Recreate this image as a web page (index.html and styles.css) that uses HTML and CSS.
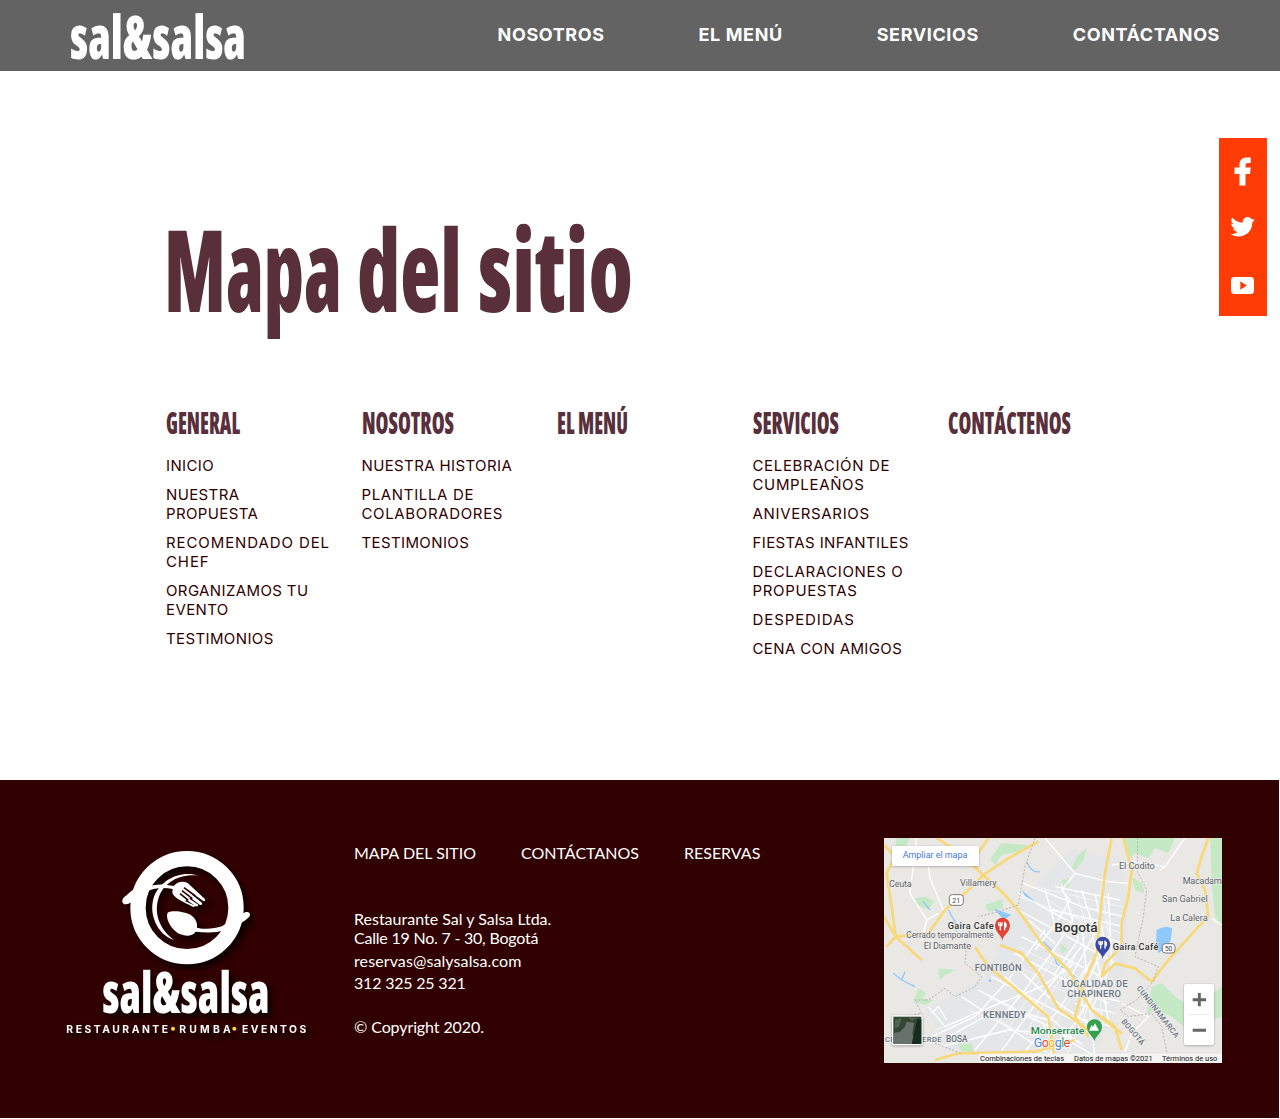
FILE: index.html
```html
<!DOCTYPE html>
<html lang="es">
<head>
<meta charset="utf-8">
<title>Sal &amp; Salsa - Mapa del sitio</title>
<link rel="stylesheet" href="styles.css">
</head>
<body>
<header class="header">
  <svg class="brand" viewBox="0 0 176 60" role="img"><text class="display" x="0" y="54" font-size="61" textLength="176" lengthAdjust="spacingAndGlyphs">sal&amp;salsa</text></svg>
  <nav class="nav">
    <a>NOSOTROS</a><a>EL MENÚ</a><a>SERVICIOS</a><a>CONTÁCTANOS</a>
  </nav>
</header>

<aside class="social">
  <svg viewBox="0 0 48 178">
    <path d="M21.500 47.500V36H16.500V29.500H21.500V27C21.500 21.500 24.500 19.500 28.500 19.500H32.700V25H30C28 25 27.500 26 27.500 27.500V29.500H32.700L32 36H27.500V47.500Z"/>
    <path d="M36.500 80.500C35.700 81 34.800 81.200 34 81.300C33 80 31.500 79 29.700 79C26.800 79 24.400 81.500 24.800 84.700C20.500 84.500 16.700 82.600 14 79.500C12.800 82 13.200 84.600 15.500 86.300C14.700 86.300 14 86 13.200 85.600C13.300 88 14.800 90 17.200 90.600H15C15.700 92.500 17.500 93.800 19.700 94C17.700 95.500 15.300 96.300 12.700 96C14.700 97.600 17.500 98.500 20.300 98.500C29 98.500 34.600 91.500 34.300 84.500C35.300 83.700 36 82.800 36.600 81.800L34 82.500C35 81.900 36 81 36.500 80.500Z"/>
    <path fill-rule="evenodd" d="M17 139H32C35 139 36 140 36 142.500V152.500C36 155 35 156 32 156H17C14 156 13 155 13 152.500V142.500C13 140 14 139 17 139ZM22.300 143.300V151.800L28.800 147.500Z"/>
  </svg>
</aside>

<main class="main">
  <h1 class="title"><svg viewBox="0 0 480 130"><g class="display" font-size="114"><text x="-2" y="98" textLength="178" lengthAdjust="spacingAndGlyphs">Mapa</text><text x="191" y="98" textLength="105" lengthAdjust="spacingAndGlyphs">del</text><text x="312" y="98" textLength="155" lengthAdjust="spacingAndGlyphs">sitio</text></g></svg></h1>
  <div class="columns">
    <section><h2><svg viewBox="0 0 140 36"><text class="display" y="30" font-size="29.500" textLength="74" lengthAdjust="spacingAndGlyphs">GENERAL</text></svg></h2>
      <ul><li>INICIO</li><li>NUESTRA<br>PROPUESTA</li><li class="wide">RECOMENDADO DEL<br>CHEF</li><li>ORGANIZAMOS TU<br>EVENTO</li><li>TESTIMONIOS</li></ul></section>
    <section><h2><svg viewBox="0 0 140 36"><text class="display" y="30" font-size="29.500" textLength="92" lengthAdjust="spacingAndGlyphs">NOSOTROS</text></svg></h2>
      <ul><li>NUESTRA HISTORIA</li><li class="mid">PLANTILLA DE<br>COLABORADORES</li><li>TESTIMONIOS</li></ul></section>
    <section><h2><svg viewBox="0 0 140 36"><text class="display" y="30" font-size="29.500" textLength="71" lengthAdjust="spacingAndGlyphs">EL MENÚ</text></svg></h2></section>
    <section><h2><svg viewBox="0 0 140 36"><text class="display" y="30" font-size="29.500" textLength="86" lengthAdjust="spacingAndGlyphs">SERVICIOS</text></svg></h2>
      <ul><li class="mid">CELEBRACIÓN DE<br>CUMPLEAÑOS</li><li class="mid">ANIVERSARIOS</li><li>FIESTAS INFANTILES</li><li class="mid">DECLARACIONES O<br>PROPUESTAS</li><li class="wide">DESPEDIDAS</li><li>CENA CON AMIGOS</li></ul></section>
    <section><h2><svg viewBox="0 0 140 36"><text class="display" y="30" font-size="29.500" textLength="123" lengthAdjust="spacingAndGlyphs">CONTÁCTENOS</text></svg></h2></section>
  </div>
</main>

<footer class="footer">
  <svg class="logo" viewBox="0 0 810 645">
    <g class="logo-art">
      <circle class="ring" cx="411" cy="218" r="147"/>
      <path d="M262 158C246 163 234 177 221 188C214 195 216 207 226 208C238 209 247 198 260 190Z"/>
      <path d="M560 245C575 238 583 230 592 231C601 232 602 240 597 246C590 255 575 261 562 275Z"/>
      <path d="M447 122C390 104 331 135 312 185C295 235 320 297 372 315C332 286 312 240 324 195C337 145 385 115 447 122Z"/>
      <path d="M285 158C310 147 340 145 371 153C382 140 398 137 413 144L464 191Q468 198 461 199L430 177L427 180L456 203Q458 210 450 210L421 188L418 191L445 209Q445 216 437 214L410 195L405 198L435 212Q433 219 425 214C405 202 376 193 367 174L368 162C340 156 310 159 282 172Z"/>
      <path class="slots" d="M402 158L436 183M396 167L427 191M390 176L415 196"/>
      <path d="M353 233C368 225 407 230 425 242C438 251 442 264 441 278C466 284 492 282 516 274L532 263L524 286C495 295 463 293 437 290C429 303 409 305 392 298C365 287 345 250 353 233Z"/>
      <text class="display" x="157" y="534" font-size="170" textLength="502" lengthAdjust="spacingAndGlyphs">sal&amp;salsa</text>
      <g class="tag"><text x="49" y="593" textLength="305">RESTAURANTE</text><text x="388" y="593" textLength="154">RUMBA</text><text x="576" y="593" textLength="193">EVENTOS</text></g>
      <g fill="#ffd83c"><circle cx="369" cy="581" r="6"/><circle cx="553" cy="581" r="6"/></g>
    </g>
  </svg>
  <div class="info">
    <nav class="foot-nav"><a>MAPA DEL SITIO</a><a>CONTÁCTANOS</a><a>RESERVAS</a></nav>
    <address>Restaurante Sal y Salsa Ltda.<br><span class="street">Calle 19 No. 7 - 30, Bogotá</span></address>
    <p class="mail">reservas@salysalsa.com</p>
    <p class="phone">312 325 25 321</p>
    <p class="copy">© Copyright 2020.</p>
  </div>
  <svg class="map" viewBox="27 24 1014 675">
    <rect x="27" y="24" width="1014" height="675" fill="#e9e8e4"/>
    <path fill="#e5e6e8" d="M500 140L590 60L740 90L760 350L730 520L650 690L230 670L150 540L330 440L410 260Z"/>
    <g fill="#c5e8c5"><path d="M345 88L380 40L460 45L430 65L380 75L360 105Z"/><path d="M120 205L150 200L178 215L160 238L125 225Z"/><path d="M330 225L382 208L385 235L340 245Z"/><path d="M750 24H900L880 70L840 55L820 85L780 70L760 90Z"/><path d="M590 115L605 80L635 55L625 90L600 120Z"/><path d="M770 140L800 160L808 190L780 180Z"/><path d="M1005 24H1041V290L1020 260L1010 150Z"/><path d="M190 415L240 420L210 435L195 450Z"/><path d="M130 475L155 490L140 505L175 510L150 525L115 515Z"/><path d="M830 470L860 460L900 500L950 530L1041 470V560L990 580L930 590L890 560L850 540L815 550Z"/><path d="M560 150L580 145L583 170L565 175Z"/><path d="M65 24H105L90 50L60 60Z"/><path d="M555 340L580 360L560 370Z"/><path d="M250 645L290 640L295 665L260 665Z"/></g>
    <g fill="#8fc8fb"><path d="M845 300Q870 285 892 295L887 330Q880 350 850 370L843 340Z"/><path d="M355 235L410 255L385 268Z"/><path d="M440 180L475 210L490 225L455 207Z"/><circle cx="345" cy="452" r="4"/><path d="M850 340H870V360H850Z"/></g>
    <g class="river"><path d="M55 430L80 450L120 470M80 450L90 425M220 240L240 275L245 305M455 95Q470 130 495 125M145 215L165 240M505 335L530 360L545 400L600 440"/></g>
    <g class="streets"><path d="M125 24L110 150L105 190L155 270L190 250M155 270L140 330M160 110L165 145L205 240M510 24L600 130L700 155L760 160M930 24L870 110L780 95L710 105M870 110L855 120M1010 265L1041 285M600 130L560 180L585 210L550 270"/>
    <path d="M430 190L610 290L740 340M445 160L620 230L745 260M430 240L560 310L720 400M510 180L540 285L480 360M570 190L610 330L540 430M620 180L660 310L570 470M660 190L690 340L610 520M700 190L710 400L650 540M540 170L735 210M530 240L745 290M460 270L540 340M440 320L720 460M420 370L700 520M350 440L650 600M310 480L620 640M260 500L550 690M510 300L400 450L300 560L170 620M570 310L450 480L300 660M620 350L490 510L360 690M650 390L550 540L430 690M690 430L600 580L510 690M160 530L210 590L300 550L500 470L600 400M170 550L190 530L215 570M220 620L330 560L410 540L520 570M200 650L400 600L520 610M410 400L520 500L640 580M390 440L480 520L600 630M620 280L660 690M650 300L700 570M600 480L735 515M600 520L720 550M590 560L715 590M560 620L680 690M740 520L820 560L770 610L750 665M610 450L740 490"/></g>
    <g class="grid"><path d="M430 200L740 310M480 170L740 230M520 210L730 350M560 160L590 270L510 410M600 180L640 300L560 460M680 170L705 350L630 550M400 390L680 550M430 350L730 500M280 540L580 660M340 500L630 650M540 380L390 610M600 380L450 610M640 410L510 640M675 450L570 690M615 470L635 610M640 450L660 600M665 430L685 590M180 600L260 570L390 510"/></g>
    <g class="roads"><path d="M27 45L60 80L35 130L50 230L62 320L90 345L140 390M27 260L62 320L160 310L210 240L280 180L325 135L400 85L490 35M185 24L250 65L325 135L390 195L425 235L500 340L580 420L650 540L740 610M290 100L340 24M62 320L35 350M300 350L340 410L420 475L520 560L540 690M375 345L440 370L490 430L550 535L640 600M710 24L690 130L675 260L665 370L630 450L600 560L640 620M745 24L770 120L760 200L740 280L740 350L690 400L680 440L720 400L780 415L830 455L880 390L930 335L970 290L1000 260L990 180L965 130L980 80L1000 24M180 690L250 670L480 665L600 630M680 560L720 590L740 660"/></g>
    <path d="M480 24L450 110L430 225L370 245L310 260M788 24L787 125L815 180L805 260L780 380L850 410L835 455L785 510L735 540L760 560L830 550L860 590L880 690M275 340L270 400L320 440L300 470L240 500L210 475L160 510L120 510L140 550L90 560M180 640L260 670" class="border"/>
    <g class="labels">
      <text x="42" y="171" textLength="68">Ceuta</text><text x="255" y="167" textLength="110">Villamery</text><text x="732" y="116" textLength="107">El Codito</text><text x="923" y="162" textLength="117">Macadam</text><text x="861" y="217" textLength="137">San Gabriel</text><text x="886" y="273" textLength="112">La Calera</text><text x="94" y="325" textLength="262" lengthAdjust="spacingAndGlyphs">Cerrado temporalmente</text><text x="146" y="358" textLength="142">El Diamante</text>
    </g>
    <g class="labels strong"><text x="218" y="297" textLength="138">Gaira Cafe</text><text x="713" y="361" textLength="137">Gaira Café</text><text class="city" x="538" y="305" textLength="130">Bogotá</text></g>
    <g class="labels zone"><text x="299" y="422" textLength="141">FONTIBÓN</text><text x="324" y="565" textLength="129">KENNEDY</text><text x="560" y="470" textLength="198">LOCALIDAD DE</text><text x="577" y="500" textLength="161">CHAPINERO</text><text x="213" y="636" textLength="65" lengthAdjust="spacingAndGlyphs">BOSA</text><text x="30" y="637" textLength="170" class="small">CIUDAD VERDE</text>
      <text class="small" transform="translate(784 475) rotate(52)" textLength="190">CUNDINAMARCA</text><text class="small" transform="translate(738 575) rotate(50)" textLength="94">BOGOTÁ</text></g>
    <text class="park" x="467" y="611" textLength="161" lengthAdjust="spacingAndGlyphs">Monserrate</text>
    <g class="shield"><rect x="223" y="194" width="42" height="32" rx="9"/><text x="232" y="218">21</text><rect x="862" y="341" width="38" height="28" rx="9"/><text x="869" y="363">50</text></g>
    <path fill="#e34234" d="M382 332C380 315 360 308 360 286A22.500 22.500 0 0 1 405 286C405 308 384 315 382 332Z"/>
    <path fill="#3949a5" d="M683 386C680 369 661 363 661 343A22.500 22.500 0 0 1 706 343C706 363 686 369 683 386Z"/>
    <path fill="#34a14f" d="M658 634C655 617 636 611 636 590A22.500 22.500 0 0 1 681 590C681 611 661 617 658 634Z"/>
    <g class="fork"><path d="M371 277V285Q376 290 381 285V277M376 277V301M389 301V278Q396 282 392 291H389M672 333V341Q677 346 682 341V333M677 333V356M690 356V334Q697 338 693 347H690"/></g>
    <path fill="#fff" d="M642 602L650 585L654 591L660 580L672 602Z"/>
    <g class="google"><text x="476" y="652" textLength="110"><tspan fill="#4285f4">G</tspan><tspan fill="#ea4335">o</tspan><tspan fill="#f4b400">o</tspan><tspan fill="#4285f4">g</tspan><tspan fill="#34a853">l</tspan><tspan fill="#ea4335">e</tspan></text></g>
    <g class="control"><rect x="51" y="48" width="261" height="60"/><rect x="927" y="462" width="90" height="183" rx="6"/></g>
    <text class="enlarge" x="83" y="84" textLength="194">Ampliar el mapa</text>
    <path d="M940 554H1005" stroke="#ddd" stroke-width="2"/><path d="M953 509H993M973 489V529M953 601H993" stroke="#666" stroke-width="9"/>
    <rect x="51" y="556" width="92" height="90" rx="4" fill="#fff" class="thumb"/><rect x="55" y="560" width="84" height="82" fill="#344735"/><path fill="#69726a" d="M55 610L75 605L90 590L95 575L118 578L112 610L123 642H58Z"/><path fill="#172b1e" d="M117 610L127 568H139V642H110Z"/><path fill="#50654d" d="M60 570L80 565L72 590L60 595ZM100 562L125 565L110 572Z"/>
    <rect x="313" y="671" width="728" height="28" fill="#f5f5f4"/>
    <g class="terms"><text x="315" y="692" textLength="252" lengthAdjust="spacingAndGlyphs">Combinaciones de teclas</text><text x="597" y="692" textLength="236" lengthAdjust="spacingAndGlyphs">Datos de mapas ©2021</text><text x="861" y="692" textLength="166" lengthAdjust="spacingAndGlyphs">Términos de uso</text></g>
  </svg>
</footer>
</body>
</html>
```
FILE: styles.css
```css
* { box-sizing: border-box; }
body { margin: 0; background: #fff; font-family: Lato, sans-serif; color: #310000; }
svg { display: block; overflow: visible; }
h1, h2, p, ul { margin: 0; padding: 0; }
ul { list-style: none; }
.display { font-family: "Open Sans", sans-serif; font-weight: 800; font-stretch: 75%; fill: currentColor; }

.header { height: 71px; background: #636363; color: #fff; display: flex; justify-content: space-between; padding: 5px 60px 0 70px; }
.brand { width: 176px; height: 60px; }
.nav { display: flex; gap: 94px; padding-top: 19px; font: 700 18px/22px Inter, sans-serif; letter-spacing: .6px; }

.social { position: absolute; top: 138px; right: 13px; width: 48.500px; height: 178px; background: #ff3c05; }
.social svg { width: 48px; height: 178px; margin-left: -.5px; fill: #fff; }

.main { height: 709px; padding: 143px 136px 0 166px; }
.title { color: #582f3b; height: 190px; }
.title svg { width: 480px; height: 130px; }
.columns { display: grid; grid-template-columns: repeat(5, 195.500px); }
.columns h2 { color: #582f3b; height: 52px; }
.columns h2 svg { width: 140px; height: 36px; }
.columns ul { display: flex; flex-direction: column; gap: 10px; font: 400 15px/19px Inter, sans-serif; letter-spacing: .38px; white-space: nowrap; }
.columns .mid { letter-spacing: .65px; }
.columns .wide { letter-spacing: .9px; }

.footer { width: 1279px; height: 338px; background: #310000; color: #fff; display: flex; align-items: flex-start; padding-left: 50px; font-size: 16px; line-height: 19px; }
.logo { width: 270px; height: 215px; margin-top: 55px; flex: none; }
.logo-art { fill: #fff; filter: drop-shadow(12px 14px 9px rgba(0, 0, 0, .75)); }
.ring { fill: none; stroke: #fff; stroke-width: 46; }
.slots { stroke: #310000; stroke-width: 5; }
.tag { font: 700 31px Inter, sans-serif; }
.info { width: 530px; margin: 63px 0 0 34px; flex: none; }
.foot-nav { display: flex; gap: 45px; margin-bottom: 47px; }
address { font-style: normal; }
.street { letter-spacing: -.22px; }
.mail { margin-top: 4px; letter-spacing: .1px; }
.phone { margin-top: 3px; letter-spacing: -.2px; }
.copy { margin-top: 25px; letter-spacing: -.1px; }
.map { width: 338px; height: 225px; margin-top: 58px; overflow: hidden; flex: none; }
.map text { font-family: Roboto, sans-serif; }
.river { fill: none; stroke: #8fc8fb; stroke-width: 4; }
.streets { fill: none; stroke: #fff; stroke-width: 4; }
.grid { fill: none; stroke: #fff; stroke-width: 3; opacity: .6; }
.roads { fill: none; stroke: #f9d877; stroke-width: 8; stroke-linejoin: round; }
.border { fill: none; stroke: #b5b5b8; stroke-width: 3; stroke-dasharray: 6 5; }
.labels { font-size: 27.500px; fill: #5d6268; stroke: #f0f0ee; stroke-width: 4; paint-order: stroke; }
.strong { fill: #333; font-weight: 500; }
.city { font-size: 41px; }
.zone { font-size: 28px; font-weight: 500; fill: #687383; }
.small { font-size: 23px; }
.park { font-size: 29px; font-weight: 500; fill: #248447; stroke: #fff; stroke-width: 4; paint-order: stroke; }
.shield rect { fill: #fff; stroke: #777; stroke-width: 3; }
.shield text { font-size: 21px; fill: #444; }
.fork { fill: none; stroke: #fff; stroke-width: 4; }
.google { font-size: 38px; stroke: #fff; stroke-width: 4; paint-order: stroke; }
.control { fill: #fff; filter: drop-shadow(0 2px 3px rgba(0, 0, 0, .3)); }
.thumb { filter: drop-shadow(0 2px 3px rgba(0, 0, 0, .4)); }
.enlarge { font-size: 27px; fill: #467bd1; }
.terms { font-size: 24px; fill: #111; }
```
